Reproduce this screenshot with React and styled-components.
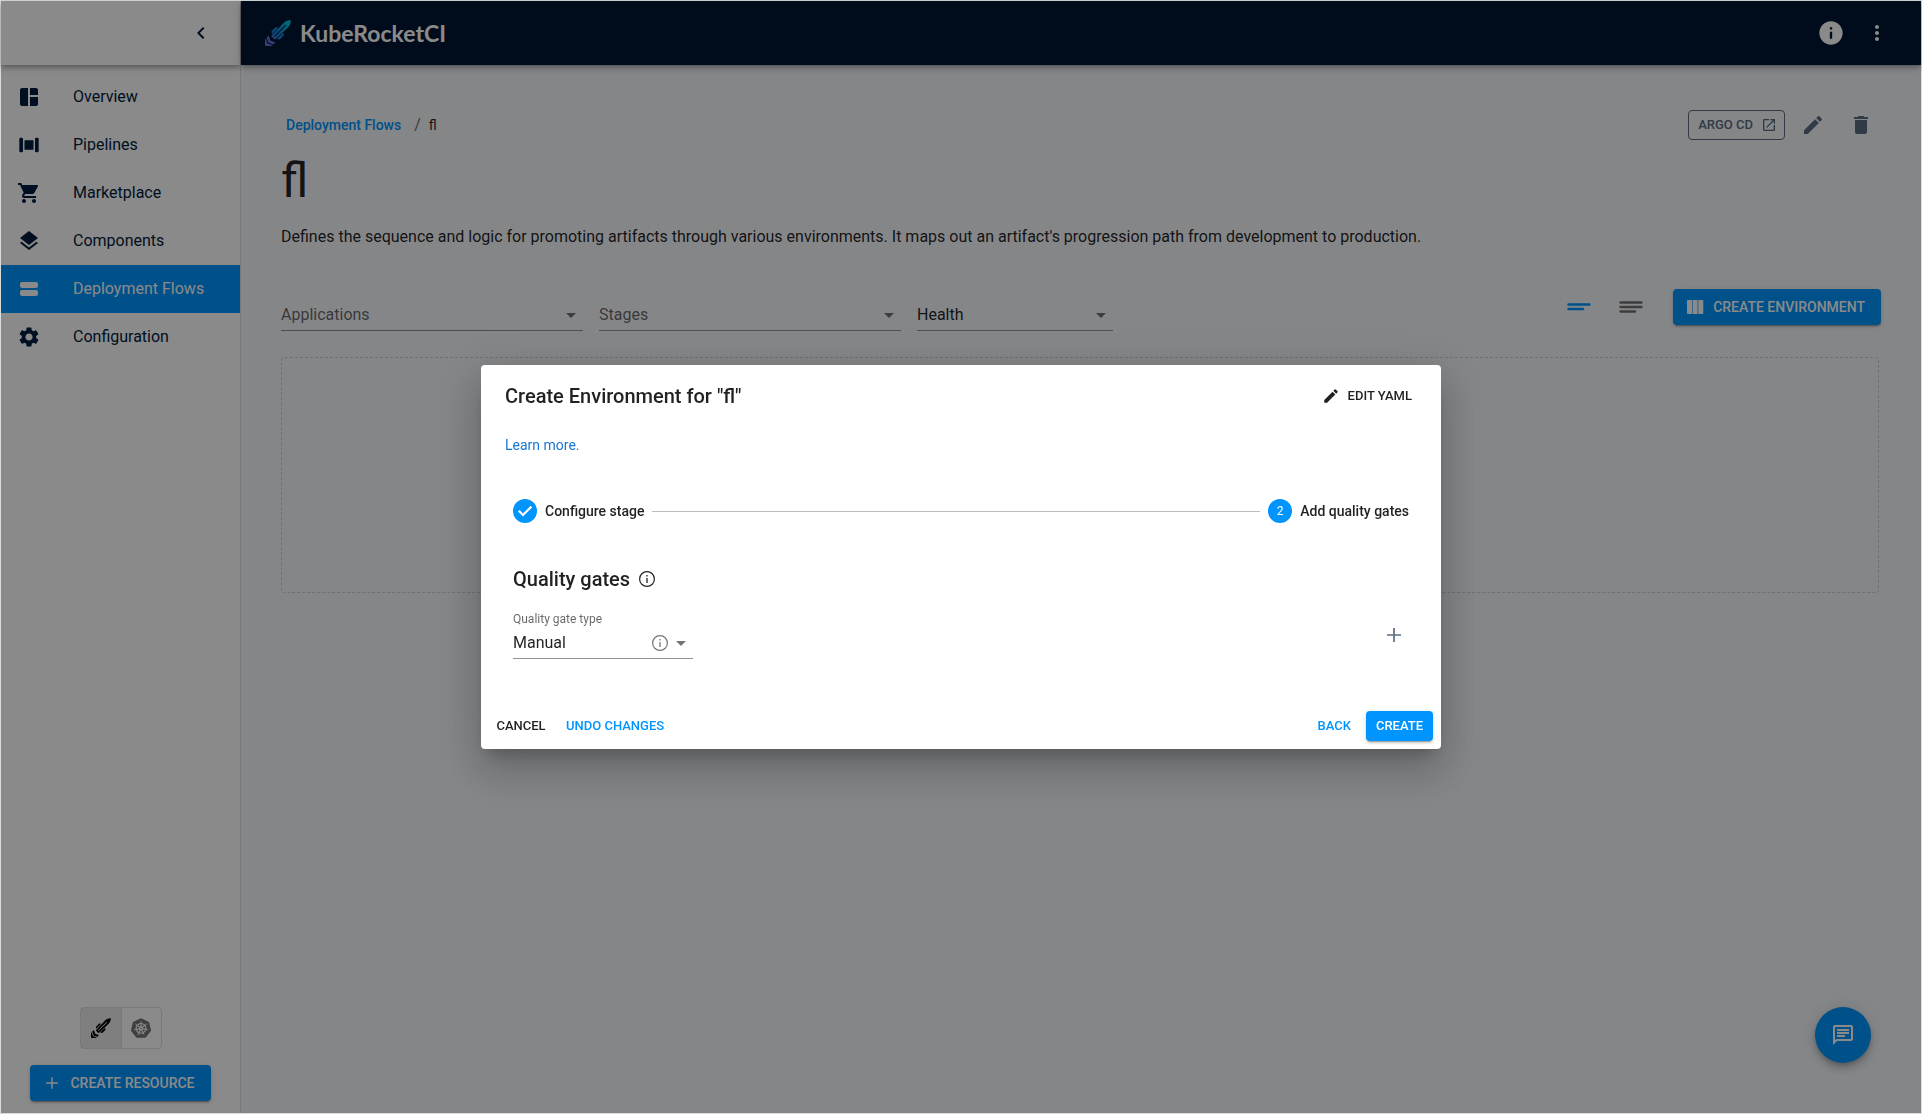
import React from "react";
import styled, { createGlobalStyle, css } from "styled-components";
import {
  MdArrowDropDown,
  MdChevronLeft,
  MdDelete,
  MdEdit,
  MdInfo,
  MdLayers,
  MdMoreVert,
  MdOpenInNew,
  MdOutlineChat,
  MdSettings,
  MdShoppingCart,
  MdSpaceDashboard,
} from "react-icons/md";
import { SiKubernetes } from "react-icons/si";

const color = {
  navy: "#001634",
  ink: "#001c3d",
  blue: "#0094ff",
  link: "#1976d2",
  slate: "#596d80",
  text: "rgba(0, 0, 0, 0.87)",
  muted: "rgba(0, 0, 0, 0.6)",
  icon: "rgba(0, 0, 0, 0.54)",
  line: "rgba(0, 0, 0, 0.42)",
};

const raised =
  "0 3px 1px -2px rgba(0,0,0,.2), 0 2px 2px 0 rgba(0,0,0,.14), 0 1px 5px 0 rgba(0,0,0,.12)";
const barShadow =
  "0 2px 4px -1px rgba(0,0,0,.2), 0 4px 5px 0 rgba(0,0,0,.14), 0 1px 10px 0 rgba(0,0,0,.12)";

const GlobalStyle = createGlobalStyle`
  *, *::before, *::after { box-sizing: border-box; }
  body {
    margin: 0;
    background: #d8dcdc;
    color: ${color.text};
    font-family: Roboto, "Liberation Sans", sans-serif;
    font-size: 16px;
    line-height: 24px;
  }
  button, select { font: inherit; color: inherit; }
  h1, h2, h3, p, ol, ul { margin: 0; padding: 0; }
  svg { display: block; flex: none; }
`;

const Frame = styled.div`
  display: flex;
  min-height: 100vh;
  border: 1px solid #d8dcdc;
`;

/* Sidebar */

const Sidebar = styled.aside`
  display: flex;
  flex: 0 0 240px;
  flex-direction: column;
  background: #fff;
  border-right: 1px solid rgba(0, 0, 0, 0.12);
`;

const SidebarTop = styled.div`
  display: flex;
  align-items: center;
  justify-content: flex-end;
  height: 64px;
  padding-right: 19px;
  color: ${color.ink};
  box-shadow: ${barShadow};
`;

const NavList = styled.ul`
  flex: 1;
  padding-top: 8px;
  list-style: none;
`;

const NavLink = styled.a`
  display: flex;
  align-items: center;
  gap: 32px;
  height: 48px;
  padding: 0 16px;
  color: ${(p) => (p.$active ? "#fff" : color.ink)};
  background: ${(p) => (p.$active ? color.blue : "transparent")};
  text-decoration: none;
`;

const SidebarBottom = styled.div`
  display: flex;
  flex-direction: column;
  align-items: center;
  gap: 16px;
  padding-bottom: 12px;
`;

const ToggleGroup = styled.div`
  display: flex;
  border: 1px solid rgba(0, 0, 0, 0.12);
  border-radius: 4px;
`;

const Toggle = styled.button`
  display: grid;
  place-items: center;
  width: 40px;
  height: 40px;
  padding: 0;
  border: 0;
  color: ${(p) => (p.$on ? "#000" : color.icon)};
  background: ${(p) => (p.$on ? "rgba(0, 0, 0, 0.08)" : "transparent")};
  & + & {
    border-left: 1px solid rgba(0, 0, 0, 0.12);
  }
`;

/* Buttons */

const buttonKinds = {
  contained: css`
    color: #fff;
    background: ${color.blue};
    box-shadow: ${raised};
  `,
  outlined: css`
    color: ${color.slate};
    background: transparent;
    border: 1px solid ${color.slate};
  `,
  text: css`
    color: ${(p) => (p.$primary ? color.blue : color.text)};
    background: transparent;
  `,
};

const Button = styled.button`
  display: inline-flex;
  align-items: center;
  justify-content: center;
  gap: 8px;
  height: ${(p) => (p.$small ? 30 : 36)}px;
  min-width: ${(p) => p.$min || 0}px;
  padding: 0 ${(p) => p.$pad || 16}px;
  border: 0;
  border-radius: 4px;
  font-size: ${(p) => (p.$small ? 13 : 14)}px;
  font-weight: 500;
  text-transform: uppercase;
  white-space: nowrap;
  ${(p) => buttonKinds[p.$kind || "text"]}
`;

const StartIcon = styled.span`
  display: flex;
  margin-left: -4px;
`;

const EndIcon = styled.span`
  display: flex;
  margin-right: -2px;
`;

const IconButton = styled.button`
  display: grid;
  place-items: center;
  width: ${(p) => p.$size || 40}px;
  height: ${(p) => p.$size || 40}px;
  padding: 0;
  border: 0;
  border-radius: 50%;
  color: ${(p) => p.$color || "inherit"};
  background: transparent;
`;

/* Top bar */

const Column = styled.div`
  display: flex;
  flex: 1;
  flex-direction: column;
  min-width: 0;
  background: #f6f8fc;
`;

const TopBar = styled.header`
  display: flex;
  align-items: center;
  justify-content: space-between;
  height: 64px;
  padding: 0 24px;
  color: #fff;
  background: ${color.navy};
  box-shadow: ${barShadow};
`;

const Brand = styled.a`
  display: flex;
  align-items: center;
  gap: 9px;
  color: inherit;
  font-family: Lato, Roboto, sans-serif;
  font-size: 23px;
  font-weight: 700;
  text-decoration: none;
`;

const Actions = styled.div`
  display: flex;
  align-items: center;
  gap: ${(p) => (p.$gap === undefined ? 8 : p.$gap)}px;
`;

/* Page */

const Page = styled.main`
  display: flex;
  flex-direction: column;
  padding: 40px;
`;

const Row = styled.div`
  display: flex;
  align-items: center;
  justify-content: space-between;
`;

const Breadcrumbs = styled.nav`
  display: flex;
  align-items: center;
  gap: 8px;
  padding-left: 5px;
  font-size: 14px;
  a {
    margin-right: 5px;
    color: ${color.blue};
    font-weight: 500;
    text-decoration: none;
  }
  span {
    color: ${color.muted};
    font-size: 16px;
  }
`;

const PageTitle = styled.h1`
  margin-top: 8px;
  font-size: 48px;
  font-weight: 400;
  line-height: 56px;
`;

const Description = styled.p`
  margin: 16px 0 34px;
`;

const Filters = styled.div`
  display: flex;
  flex: 1;
  gap: 16px;
  padding-top: 16px;
`;

const SelectBox = styled.div`
  display: grid;
  flex: 0 1 ${(p) => p.$width}px;
  align-items: center;
  width: ${(p) => p.$width}px;
  height: 32px;
  border-bottom: 1px solid ${color.line};
  > * {
    grid-area: 1 / 1;
  }
`;

const Select = styled.select`
  width: 100%;
  height: 31px;
  padding: 0;
  border: 0;
  outline: 0;
  appearance: none;
  background: transparent;
  color: ${(p) => (p.$empty ? color.muted : color.text)};
`;

const SelectIcons = styled.span`
  display: flex;
  align-items: center;
  justify-self: end;
  color: ${color.icon};
  pointer-events: none;
`;

const EmptyBoard = styled.div`
  height: 236px;
  margin: 26px 2px 0 0;
  border: 1px dashed rgba(0, 0, 0, 0.16);
  border-radius: 4px;
`;

const ChatButton = styled.button`
  position: fixed;
  right: 51px;
  bottom: 51px;
  display: grid;
  place-items: center;
  width: 56px;
  height: 56px;
  border: 0;
  border-radius: 50%;
  color: #fff;
  background: ${color.blue};
  box-shadow: 0 3px 5px -1px rgba(0, 0, 0, 0.2), 0 6px 10px 0 rgba(0, 0, 0, 0.14),
    0 1px 18px 0 rgba(0, 0, 0, 0.12);
`;

/* Dialog */

const Backdrop = styled.div`
  position: fixed;
  inset: 1px;
  display: grid;
  place-items: center;
  background: rgba(0, 0, 0, 0.46);
`;

const Dialog = styled.section`
  display: flex;
  flex-direction: column;
  width: 100%;
  max-width: 960px;
  border-radius: 4px;
  background: #fff;
  box-shadow: 0 11px 15px -7px rgba(0, 0, 0, 0.2), 0 24px 38px 3px rgba(0, 0, 0, 0.14),
    0 9px 46px 8px rgba(0, 0, 0, 0.12);
`;

const DialogHead = styled.div`
  padding: 16px 24px;
`;

const Heading = styled.h2`
  font-size: 20px;
  font-weight: 500;
  line-height: 30px;
`;

const LearnMore = styled.a`
  display: block;
  width: fit-content;
  margin-top: 24px;
  color: ${color.link};
  font-size: 14px;
  line-height: 20px;
  text-decoration: none;
`;

const DialogBody = styled.div`
  display: flex;
  flex-direction: column;
  gap: 40px;
  padding: 28px 32px 44px;
`;

const Stepper = styled.ol`
  display: flex;
  align-items: center;
  gap: 8px;
  list-style: none;
`;

const Step = styled.li`
  display: flex;
  align-items: center;
  gap: 8px;
  font-size: 14px;
  font-weight: 500;
`;

const StepMark = styled.span`
  display: grid;
  place-items: center;
  width: 24px;
  height: 24px;
  border-radius: 50%;
  color: #fff;
  background: ${color.blue};
  font-size: 12px;
  font-weight: 400;
`;

const StepLine = styled.li`
  flex: 1;
  height: 1px;
  background: #bdbdbd;
`;

const GateHeading = styled.div`
  display: flex;
  align-items: center;
  gap: 8px;
  height: 32px;
  margin-bottom: 16px;
`;

const GateField = styled.div`
  label {
    display: block;
    color: ${color.muted};
    font-size: 12px;
    line-height: 16px;
  }
`;

const DialogFoot = styled.div`
  display: flex;
  justify-content: space-between;
  padding: 8px;
`;

/* Drawings */

const Rocket = ({ size, gradient }) => {
  const paint = gradient ? "url(#rocket-paint)" : "currentColor";
  return (
    <svg width={size} height={size} viewBox="0 0 26 26" aria-hidden="true">
      <defs>
        <linearGradient id="rocket-paint" gradientUnits="userSpaceOnUse" x1="0" y1="-18" x2="0" y2="18">
          <stop offset="0" stopColor="#00d0d8" />
          <stop offset="0.5" stopColor="#1083d6" />
          <stop offset="1" stopColor="#8b6be0" />
        </linearGradient>
      </defs>
      <g transform="translate(13 13) rotate(45)" fill={paint}>
        <path
          fillRule="evenodd"
          d="M0-18C2.400-16 3.300-13 3.200-10L2.600 7H-2.600L-3.200-10C-3.300-13-2.400-16 0-18ZM-.500-11V5H.500V-11Z"
        />
        <path d="M3.600-4L5.800-2.500V3.500L3.400 5ZM-3.600-4L-5.800-2.500V3.500L-3.400 5Z" />
        <path d="M-4.800 8.500L0 10.600 4.800 8.500V11.500L0 13.600-4.800 11.500Z" />
        <path d="M-4.800 12.700L0 14.800 4.800 12.700V14.900L0 18-4.800 14.900Z" />
      </g>
    </svg>
  );
};

const PlusIcon = ({ size }) => (
  <svg width={size} height={size} viewBox="0 0 24 24" stroke="currentColor" strokeWidth="1.700" aria-hidden="true">
    <path d="M12 5v14M5 12h14" />
  </svg>
);

const PipelineIcon = () => (
  <svg width="24" height="24" viewBox="0 0 24 24" fill="currentColor" aria-hidden="true">
    <rect x="2.300" y="4.700" width="3.700" height="14.600" rx="1.200" />
    <rect x="18" y="4.700" width="3.700" height="14.600" rx="1.200" />
    <rect x="7.500" y="7.300" width="9" height="9.400" rx="0.500" />
  </svg>
);

const StreamIcon = () => (
  <svg width="24" height="24" viewBox="0 0 24 24" fill="currentColor" aria-hidden="true">
    <rect x="3" y="5" width="18" height="6" rx="2" />
    <rect x="3" y="13" width="18" height="6" rx="2" />
  </svg>
);

const ColumnsIcon = () => (
  <svg width="20" height="20" viewBox="0 0 20 20" fill="currentColor" aria-hidden="true">
    <rect x="2" y="3" width="5" height="14" rx="0.800" />
    <rect x="7.600" y="3" width="5" height="14" />
    <rect x="13.300" y="3" width="5" height="14" rx="0.800" />
  </svg>
);

const LinesIcon = ({ full }) => (
  <svg width="24" height="24" viewBox="0 0 24 24" stroke="currentColor" strokeWidth="2.400" strokeLinecap="round" aria-hidden="true">
    <path d={full ? "M1.500 7.500h21M1.500 12h21M1.500 16.500h14.500" : "M1.500 9.500h21M1.500 14h14.500"} />
  </svg>
);

const InfoRing = () => (
  <svg width="18" height="18" viewBox="0 0 18 18" fill="none" stroke="currentColor" aria-hidden="true">
    <circle cx="9" cy="9" r="7.400" strokeWidth="1.200" />
    <path d="M9 8v5M9 5v1.400" strokeWidth="1.300" />
  </svg>
);

const CheckIcon = () => (
  <svg width="24" height="24" viewBox="0 0 24 24" fill="none" stroke="currentColor" strokeWidth="2.200" aria-hidden="true">
    <path d="M5.800 11.800L10 16 18.400 7.600" />
  </svg>
);

const navItems = [
  { label: "Overview", icon: <MdSpaceDashboard size={24} /> },
  { label: "Pipelines", icon: <PipelineIcon /> },
  { label: "Marketplace", icon: <MdShoppingCart size={24} /> },
  { label: "Components", icon: <MdLayers size={24} /> },
  { label: "Deployment Flows", icon: <StreamIcon />, active: true },
  { label: "Configuration", icon: <MdSettings size={24} /> },
];

const filters = [
  { label: "Applications", width: 302, empty: true },
  { label: "Stages", width: 302, empty: true },
  { label: "Health", width: 196 },
];

export default function App() {
  return (
    <>
      <GlobalStyle />
      <Frame>
        <Sidebar>
          <SidebarTop>
            <IconButton aria-label="Collapse menu">
              <MdChevronLeft size={24} />
            </IconButton>
          </SidebarTop>
          <NavList>
            {navItems.map((item) => (
              <li key={item.label}>
                <NavLink href="#" $active={item.active}>
                  {item.icon}
                  {item.label}
                </NavLink>
              </li>
            ))}
          </NavList>
          <SidebarBottom>
            <ToggleGroup>
              <Toggle $on aria-label="KubeRocketCI view" aria-pressed="true">
                <Rocket size={20} />
              </Toggle>
              <Toggle aria-label="Kubernetes view" aria-pressed="false">
                <SiKubernetes size={20} />
              </Toggle>
            </ToggleGroup>
            <Button $kind="contained">
              <StartIcon>
                <PlusIcon size={20} />
              </StartIcon>
              Create resource
            </Button>
          </SidebarBottom>
        </Sidebar>

        <Column>
          <TopBar>
            <Brand href="#">
              <Rocket size={26} gradient />
              KubeRocketCI
            </Brand>
            <Actions $gap={6}>
              <IconButton aria-label="Cluster information">
                <MdInfo size={28} />
              </IconButton>
              <IconButton aria-label="More options">
                <MdMoreVert size={24} />
              </IconButton>
            </Actions>
          </TopBar>

          <Page>
            <Row>
              <Breadcrumbs aria-label="Breadcrumb">
                <a href="#">Deployment Flows</a>
                <span>/</span>
                fl
              </Breadcrumbs>
              <Actions>
                <Button $kind="outlined" $small $pad={9}>
                  Argo CD
                  <EndIcon>
                    <MdOpenInNew size={16} />
                  </EndIcon>
                </Button>
                <IconButton aria-label="Edit" $color={color.slate}>
                  <MdEdit size={24} />
                </IconButton>
                <IconButton aria-label="Delete" $color={color.slate}>
                  <MdDelete size={24} />
                </IconButton>
              </Actions>
            </Row>
            <PageTitle>fl</PageTitle>
            <Description>
              Defines the sequence and logic for promoting artifacts through various environments. It maps out an
              artifact's progression path from development to production.
            </Description>
            <Row>
              <Filters>
                {filters.map((f) => (
                  <SelectBox key={f.label} $width={f.width}>
                    <Select aria-label={f.label} $empty={f.empty}>
                      <option>{f.label}</option>
                    </Select>
                    <SelectIcons>
                      <MdArrowDropDown size={24} />
                    </SelectIcons>
                  </SelectBox>
                ))}
              </Filters>
              <Actions $gap={22}>
                <Actions $gap={12}>
                  <IconButton aria-label="Compact view" $color={color.blue}>
                    <LinesIcon />
                  </IconButton>
                  <IconButton aria-label="Detailed view" $color={color.icon}>
                    <LinesIcon full />
                  </IconButton>
                </Actions>
                <Button $kind="contained">
                  <StartIcon>
                    <ColumnsIcon />
                  </StartIcon>
                  Create environment
                </Button>
              </Actions>
            </Row>
            <EmptyBoard />
          </Page>
        </Column>
      </Frame>

      <ChatButton aria-label="Open chat">
        <MdOutlineChat size={24} />
      </ChatButton>

      <Backdrop>
        <Dialog role="dialog" aria-modal="true" aria-labelledby="dialog-title">
          <DialogHead>
            <Row>
              <Heading id="dialog-title">Create Environment for "fl"</Heading>
              <Button $small $pad={5}>
                <MdEdit size={18} />
                Edit YAML
              </Button>
            </Row>
            <LearnMore href="#">Learn more.</LearnMore>
          </DialogHead>
          <DialogBody>
            <Stepper>
              <Step>
                <StepMark>
                  <CheckIcon />
                </StepMark>
                Configure stage
              </Step>
              <StepLine aria-hidden="true" />
              <Step aria-current="step">
                <StepMark>2</StepMark>
                Add quality gates
              </Step>
            </Stepper>
            <div>
              <GateHeading>
                <Heading as="h3">Quality gates</Heading>
                <InfoRing />
              </GateHeading>
              <Row>
                <GateField>
                  <label htmlFor="gate-type">Quality gate type</label>
                  <SelectBox $width={180}>
                    <Select id="gate-type">
                      <option>Manual</option>
                    </Select>
                    <SelectIcons>
                      <InfoRing />
                      <MdArrowDropDown size={24} />
                    </SelectIcons>
                  </SelectBox>
                </GateField>
                <IconButton aria-label="Add quality gate" $size={30} $color={color.slate}>
                  <PlusIcon size={24} />
                </IconButton>
              </Row>
            </div>
          </DialogBody>
          <DialogFoot>
            <Actions>
              <Button $small $pad={5} $min={64}>
                Cancel
              </Button>
              <Button $small $pad={5} $primary>
                Undo changes
              </Button>
            </Actions>
            <Actions $gap={10}>
              <Button $small $pad={5} $primary>
                Back
              </Button>
              <Button $kind="contained" $small $pad={10}>
                Create
              </Button>
            </Actions>
          </DialogFoot>
        </Dialog>
      </Backdrop>
    </>
  );
}
